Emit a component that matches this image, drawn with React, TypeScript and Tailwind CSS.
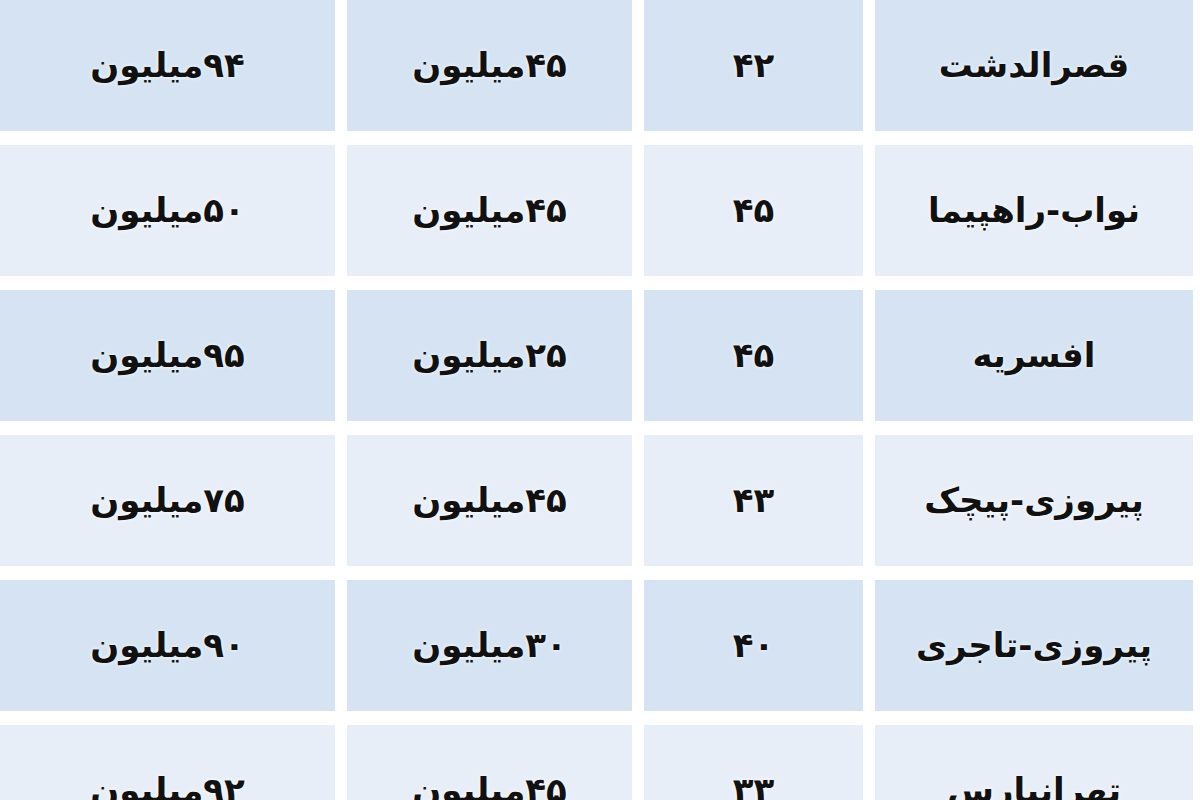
import React from "react";

const rows: string[][] = [
  ["قصرالدشت", "۴۲", "۴۵میلیون", "۹۴میلیون"],
  ["نواب-راهپیما", "۴۵", "۴۵میلیون", "۵۰میلیون"],
  ["افسریه", "۴۵", "۲۵میلیون", "۹۵میلیون"],
  ["پیروزی-پیچک", "۴۳", "۴۵میلیون", "۷۵میلیون"],
  ["پیروزی-تاجری", "۴۰", "۳۰میلیون", "۹۰میلیون"],
  ["تهرانپارس", "۳۳", "۴۵میلیون", "۹۲میلیون"],
];

export default function App() {
  return (
    <div className="w-[1200px] h-[800px] overflow-hidden bg-white pr-[7px]">
      <div
        dir="rtl"
        className="grid grid-cols-[318px_219px_285px_335px] gap-x-3 gap-y-[14px] auto-rows-[131px] font-['DejaVu_Sans',sans-serif] font-bold text-[34px] text-[#111]"
      >
        {rows.map((r, i) =>
          r.map((c, j) => (
            <div
              key={`${i}-${j}`}
              className={`flex items-center justify-center ${
                i % 2 === 0 ? "bg-[#d5e3f2]" : "bg-[#e8eef7]"
              } [text-shadow:0_0_4px_#fff]`}
            >
              {c}
            </div>
          ))
        )}
      </div>
    </div>
  );
}
